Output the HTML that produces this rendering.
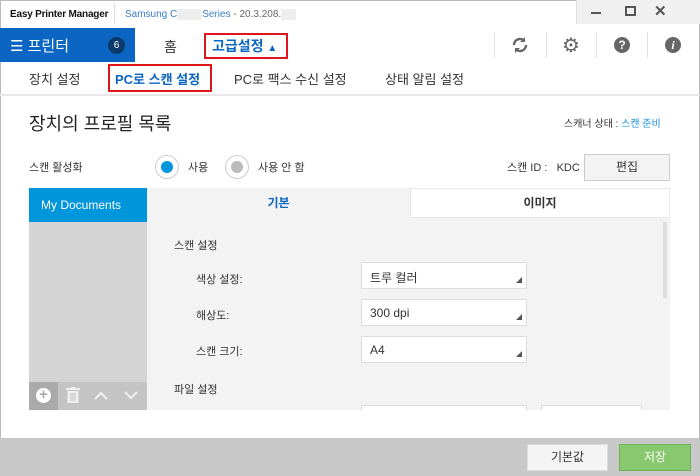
<!DOCTYPE html>
<html><head><meta charset="utf-8"><style>
*{margin:0;padding:0;box-sizing:border-box}
body{width:700px;height:476px;overflow:hidden;background:#fff;font-family:"Liberation Sans","Noto Sans CJK KR",sans-serif;position:relative;color:#333}
.a{position:absolute}
.dd{position:absolute;left:361px;width:166px;height:27px;background:#fff;border:1px solid #ddd;font-size:12px;padding:6px 8px;color:#333}
.dd:after{content:"";position:absolute;right:4px;bottom:5px;border-left:6px solid transparent;border-bottom:6px solid #555}
.sep{position:absolute;top:32px;width:1px;height:26px;background:#e3e3e3}
</style></head><body>
<div class="a" style="left:0;top:0;width:700px;height:476px;border:1px solid #bbb"></div>
<div class="a" style="left:10px;top:9px;font-size:10px;font-weight:bold;color:#111;letter-spacing:-0.2px">Easy Printer Manager</div>
<div class="a" style="left:114px;top:3px;width:1px;height:20px;background:#ddd"></div>
<div class="a" style="left:125px;top:9px;font-size:10px;color:#3a7bc8">Samsung C<span style="background:#eee;color:#eee">xxxxx</span>Series <span style="color:#666">- 20.3.208.</span><span style="background:#eee;color:#eee">xxx</span></div>
<div class="a" style="left:576px;top:0;width:124px;height:24px;background:#f0f0f0;border-left:1px solid #ddd"></div>
<div class="a" style="left:591px;top:12px;width:10px;height:2px;background:#555"></div>
<div class="a" style="left:625px;top:6px;width:11px;height:10px;border:2px solid #555"></div>
<div class="a" style="left:654px;top:2px;font-size:15px;color:#555;font-weight:bold">✕</div>
<div class="a" style="left:0;top:28px;width:135px;height:34px;background:#0a66c2"></div>
<div class="a" style="left:10px;top:35px;font-size:15px;color:#fff">☰ 프린터</div>
<div class="a" style="left:108px;top:37px;width:17px;height:17px;border-radius:50%;background:#0b3a6b;color:#fff;font-size:10px;text-align:center;line-height:17px">6</div>
<div class="a" style="left:164px;top:37px;font-size:14px">홈</div>
<div class="a" style="left:204px;top:33px;width:84px;height:26px;border:2px solid #e0141b"></div>
<div class="a" style="left:212px;top:36px;font-size:14px;color:#0a66c2;font-weight:bold">고급설정 <span style="font-size:10px">▲</span></div>
<div class="sep" style="left:494px"></div><div class="sep" style="left:546px"></div><div class="sep" style="left:596px"></div><div class="sep" style="left:647px"></div>
<svg class="a" style="left:511px;top:36px" width="18" height="18" viewBox="0 0 18 18"><path d="M3 9a6 6 0 0 1 10.5-4M15 9a6 6 0 0 1-10.5 4" stroke="#666" stroke-width="2.4" fill="none"/><path d="M14 1v5h-5zM4 17v-5h5z" fill="#666"/></svg>
<div class="a" style="left:562px;top:33px;font-size:20px;color:#666">⚙</div>
<div class="a" style="left:614px;top:37px;width:16px;height:16px;border-radius:50%;background:#666;color:#fff;font-size:12px;font-weight:bold;text-align:center;line-height:16px">?</div>
<div class="a" style="left:665px;top:37px;width:16px;height:16px;border-radius:50%;background:#666;color:#fff;font-size:12px;font-weight:bold;font-style:italic;font-family:'Liberation Serif',serif;text-align:center;line-height:16px">i</div>
<div class="a" style="left:29px;top:69px;font-size:13px">장치 설정</div>
<div class="a" style="left:108px;top:64px;width:104px;height:28px;border:2px solid #e0141b"></div>
<div class="a" style="left:115px;top:69px;font-size:13px;font-weight:bold;color:#0a66c2">PC로 스캔 설정</div>
<div class="a" style="left:234px;top:69px;font-size:13px">PC로 팩스 수신 설정</div>
<div class="a" style="left:385px;top:69px;font-size:13px">상태 알림 설정</div>
<div class="a" style="left:0;top:94px;width:700px;height:2px;background:#e8e8e8"></div>
<div class="a" style="left:29px;top:110px;font-size:18px;color:#222">장치의 프로필 목록</div>
<div class="a" style="left:564px;top:115px;font-size:10px">스캐너 상태 : <span style="color:#1a8fdc">스캔 준비</span></div>
<div class="a" style="left:29px;top:159px;font-size:11px">스캔 활성화</div>
<div class="a" style="left:155px;top:155px;width:24px;height:24px;border-radius:50%;border:1px solid #ccc;background:#fff"></div>
<div class="a" style="left:161px;top:161px;width:12px;height:12px;border-radius:50%;background:#0096dc"></div>
<div class="a" style="left:188px;top:159px;font-size:11px">사용</div>
<div class="a" style="left:225px;top:155px;width:24px;height:24px;border-radius:50%;border:1px solid #ccc;background:#fff"></div>
<div class="a" style="left:231px;top:161px;width:12px;height:12px;border-radius:50%;background:#bbb"></div>
<div class="a" style="left:258px;top:159px;font-size:11px">사용 안 함</div>
<div class="a" style="left:507px;top:159px;font-size:11px">스캔 ID :&nbsp;&nbsp; KDC</div>
<div class="a" style="left:584px;top:154px;width:86px;height:27px;background:#f3f3f3;border:1px solid #ccc;font-size:12px;text-align:center;line-height:25px">편집</div>
<div class="a" style="left:29px;top:188px;width:118px;height:34px;background:#0096dc;color:#fff;font-size:12px;padding:10px 12px">My Documents</div>
<div class="a" style="left:29px;top:222px;width:118px;height:160px;background:#d4d4d4"></div>
<div class="a" style="left:29px;top:382px;width:118px;height:28px;background:#c4c4c4"></div>
<div class="a" style="left:29px;top:382px;width:29px;height:28px;background:#aaa"></div>
<div class="a" style="left:36px;top:388px;width:15px;height:15px;border-radius:50%;background:#fff;color:#aaa;font-size:15px;font-weight:bold;line-height:14px;text-align:center">+</div>
<svg class="a" style="left:66px;top:387px" width="14" height="16" viewBox="0 0 14 16"><rect x="0" y="1" width="14" height="2" fill="#eee"/><rect x="5" y="0" width="4" height="2" fill="#eee"/><path d="M1.5 4h11v12h-11z" fill="#eee"/><path d="M5 6v8M7 6v8M9 6v8" stroke="#c4c4c4"/></svg>
<svg class="a" style="left:94px;top:391px" width="14" height="9" viewBox="0 0 14 9"><path d="M1 8l6-6 6 6" stroke="#eee" stroke-width="2.2" fill="none"/></svg>
<svg class="a" style="left:124px;top:391px" width="14" height="9" viewBox="0 0 14 9"><path d="M1 1l6 6 6-6" stroke="#eee" stroke-width="2.2" fill="none"/></svg>
<div class="a" style="left:147px;top:188px;width:523px;height:222px;background:#f3f3f3"></div>
<div class="a" style="left:147px;top:188px;width:263px;height:30px;font-size:12px;font-weight:bold;color:#0a66c2;text-align:center;line-height:30px">기본</div>
<div class="a" style="left:410px;top:188px;width:260px;height:30px;background:#fff;border:1px solid #e6e6e6;font-size:12px;font-weight:bold;text-align:center;line-height:28px">이미지</div>
<div class="a" style="left:663px;top:222px;width:4px;height:76px;background:#ddd"></div>
<div class="a" style="left:174px;top:237px;font-size:11px">스캔 설정</div>
<div class="a" style="left:196px;top:271px;font-size:11px">색상 설정:</div>
<div class="a" style="left:196px;top:307px;font-size:11px">해상도:</div>
<div class="a" style="left:196px;top:343px;font-size:11px">스캔 크기:</div>
<div class="a" style="left:174px;top:381px;font-size:11px">파일 설정</div>
<div class="dd" style="top:262px">트루 컬러</div>
<div class="dd" style="top:299px">300 dpi</div>
<div class="dd" style="top:336px">A4</div>
<div class="a" style="left:361px;top:405px;width:166px;height:5px;background:#fff;border:1px solid #ddd;border-bottom:none"></div>
<div class="a" style="left:541px;top:405px;width:101px;height:5px;background:#fff;border:1px solid #ddd;border-bottom:none"></div>
<div class="a" style="left:0;top:438px;width:700px;height:38px;background:#c8c8c8"></div>
<div class="a" style="left:527px;top:444px;width:81px;height:27px;background:#f4f4f4;border:1px solid #ddd;font-size:12px;text-align:center;line-height:25px">기본값</div>
<div class="a" style="left:619px;top:444px;width:72px;height:27px;background:#88c96f;border:1px solid #6fb257;color:#fff;font-size:12px;text-align:center;line-height:25px">저장</div>
</body></html>
